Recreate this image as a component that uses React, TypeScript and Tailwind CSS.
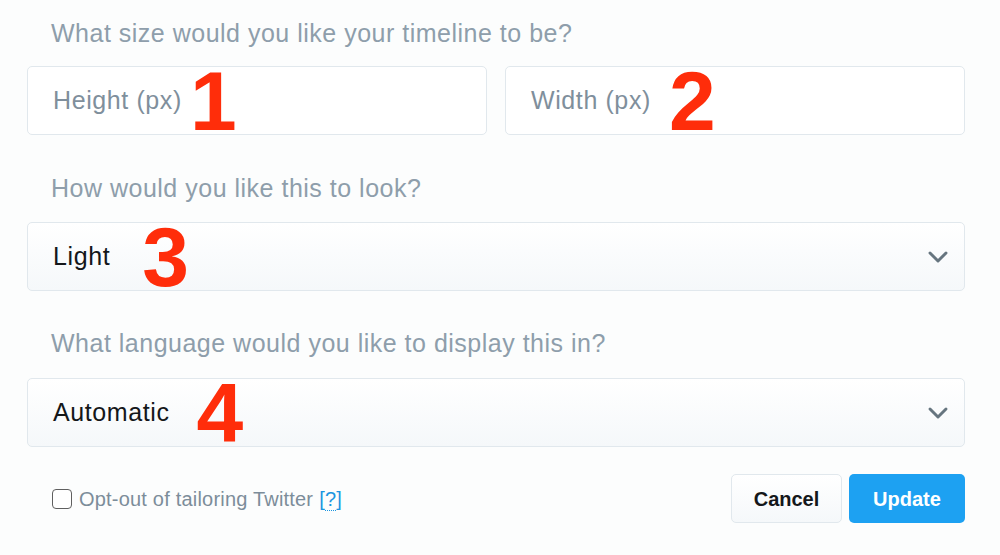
import { ChevronDown } from 'lucide-react';

const font = { fontFamily: '"Liberation Sans", Arial, sans-serif' };

const Marker = ({ n, className = '' }: { n: string; className?: string }) => (
    <span className={`text-[84px] font-bold leading-none text-[#ff2d0a] ${className}`}>{n}</span>
);

const Label = ({ children, className = '' }: { children: React.ReactNode; className?: string }) => (
    <div className={`h-8 pl-6 text-[25px] leading-8 tracking-[0.5px] text-[#8e9eab] ${className}`}>{children}</div>
);

const Select = ({ value, marker, markerGap }: { value: string; marker: string; markerGap: string }) => (
    <div className="flex h-[69px] items-center rounded-[5px] border border-[#e1e8ed] bg-gradient-to-b from-white to-[#f5f8fa] pl-[25px] pr-[10px]">
        <span className="text-[25px] tracking-[0.6px] text-[#14171a]">{value}</span>
        <Marker n={marker} className={markerGap} />
        <div className="flex-1" />
        <ChevronDown className="h-8 w-8 text-[#66757f]" strokeWidth={2.2} />
    </div>
);

export default function App() {
    return (
        <div className="min-h-[555px] w-[1000px] bg-[#fcfdfd] pl-[27px] pr-[35px] pt-[17px]" style={font}>
            <Label>What size would you like your timeline to be?</Label>
            <div className="mt-[17px] flex gap-[18px]">
                <div className="flex h-[69px] flex-1 items-center rounded-[5px] border border-[#e1e8ed] bg-white pl-[25px]">
                    <span className="text-[25px] tracking-[0.6px] text-[#7f8f9c]">Height (px)</span>
                    <Marker n="1" className="ml-[8px]" />
                </div>
                <div className="flex h-[69px] flex-1 items-center rounded-[5px] border border-[#e1e8ed] bg-white pl-[25px]">
                    <span className="text-[25px] tracking-[0.6px] text-[#7f8f9c]">Width (px)</span>
                    <Marker n="2" className="ml-[18px]" />
                </div>
            </div>

            <Label className="mt-[37px]">How would you like this to look?</Label>
            <div className="mt-[18px]">
                <Select value="Light" marker="3" markerGap="ml-[32px]" />
            </div>

            <Label className="mt-[36px]">What language would you like to display this in?</Label>
            <div className="mt-[19px]">
                <Select value="Automatic" marker="4" markerGap="ml-[27px]" />
            </div>

            <div className="mt-[27px] flex items-center">
                <label className="flex items-center pl-[25px] text-[20px] tracking-[0.2px] text-[#7c8d9a]">
                    <span className="mr-[7px] h-5 w-5 rounded-[4px] border-[1.5px] border-[#5f5f5f] bg-white" />
                    Opt-out of tailoring Twitter
                    <span className="ml-[6px] text-[#1b95e0]">
                        [<span className="border-b border-dotted border-[#1b95e0]">?</span>]
                    </span>
                </label>
                <div className="flex-1" />
                <button className="h-[49px] w-[111px] rounded-[5px] border border-[#e1e8ed] bg-gradient-to-b from-white to-[#f5f8fa] text-[20px] font-bold text-[#14171a]">
                    Cancel
                </button>
                <button className="ml-[7px] h-[49px] w-[116px] rounded-[5px] bg-[#1da1f2] text-[20px] font-bold text-white">
                    Update
                </button>
            </div>
        </div>
    );
}
